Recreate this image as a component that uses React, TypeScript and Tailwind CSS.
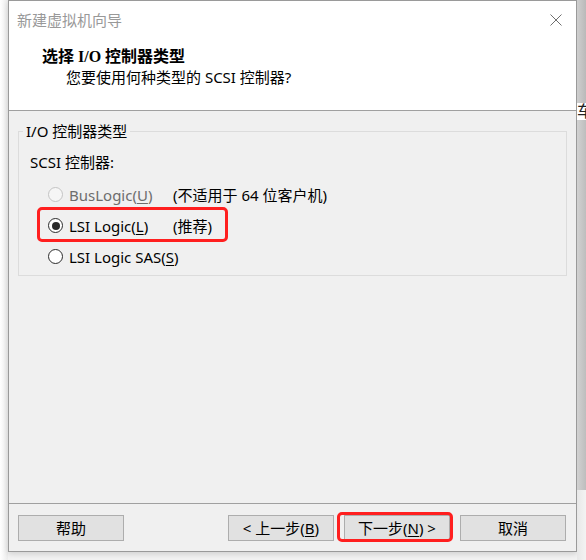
import React from 'react';

const Radio = ({ checked = false, disabled = false }: { checked?: boolean; disabled?: boolean }) => (
  <span
    className={`flex h-[15px] w-[15px] shrink-0 items-center justify-center rounded-full border ${
      disabled ? 'border-[#c4c4c4] bg-[#f6f6f6]' : 'border-[#2b2b2b] bg-white'
    }`}
  >
    {checked && <span className="h-[8px] w-[8px] rounded-full bg-[#2b2b2b]" />}
  </span>
);

const Btn = ({ children }: { children: React.ReactNode }) => (
  <button className="flex h-[26px] w-[106px] items-center justify-center border border-[#adadad] bg-[#e1e1e1] text-[15px] leading-[20px] text-black">
    {children}
  </button>
);

const u = 'underline underline-offset-[2px] decoration-1';

export default function App() {
  return (
    <div className="flex h-[560px] w-[586px] bg-[#f3f3f3] font-['Noto_Sans','Noto_Sans_CJK_SC',sans-serif] text-[15px] leading-[20px] text-black">
      <div className="w-[8px] bg-gradient-to-r from-white to-[#ececec]" />

      {/* dialog */}
      <div className="flex h-[552px] w-[569px] flex-col border border-[#9a9a9a] bg-[#f0f0f0] shadow-[0_2px_6px_rgba(0,0,0,0.15)]">
        {/* title bar */}
        <div className="flex h-[38px] items-center justify-between bg-white pl-[8px] pr-[14px]">
          <span className="text-[15px] text-[#999999]">新建虚拟机向导</span>
          <svg width="12" height="12" viewBox="0 0 12 12">
            <path d="M0.5 0.5 L11.5 11.5 M11.5 0.5 L0.5 11.5" stroke="#6f6f6f" strokeWidth="1" />
          </svg>
        </div>

        {/* header */}
        <div className="h-[72px] border-b border-[#a0a0a0] bg-white pl-[33px] pt-[8px]">
          <div className="font-['Liberation_Serif','Noto_Sans_CJK_SC',serif] text-[16px] font-bold">选择 I/O 控制器类型</div>
          <div className="pl-[24px]">您要使用何种类型的 SCSI 控制器?</div>
        </div>

        {/* body */}
        <div className="flex-1 px-[9px] pt-[10px]">
          <fieldset className="border border-[#dcdcdc] pb-[3px] pl-[11px]">
            <legend className="-ml-[7px] px-[3px]">I/O 控制器类型</legend>
            <div className="mt-[11px]">SCSI 控制器:</div>
            <div className="mt-[7px]">
              <div className="flex h-[31px] items-center">
                <div className="ml-[18px] flex w-[125px] items-center gap-[6px] text-[#6d6d6d]">
                  <Radio disabled />
                  <span>
                    BusLogic(<span className={u}>U</span>)
                  </span>
                </div>
                <span>(不适用于 64 位客户机)</span>
              </div>
              <div className="relative flex h-[31px] items-center">
                <div className="ml-[18px] flex w-[125px] items-center gap-[6px]">
                  <Radio checked />
                  <span>
                    LSI Logic(<span className={u}>L</span>)
                  </span>
                </div>
                <span>(推荐)</span>
                <div className="absolute -top-[3px] -bottom-[1px] left-[7px] w-[191px] rounded-[5px] border-[3px] border-[#ff1f1f]" />
              </div>
              <div className="flex h-[31px] items-center">
                <div className="ml-[18px] flex items-center gap-[6px]">
                  <Radio />
                  <span>
                    LSI Logic SAS(<span className={u}>S</span>)
                  </span>
                </div>
              </div>
            </div>
          </fieldset>
        </div>

        {/* footer */}
        <div className="flex h-[48px] items-start border-t border-[#a0a0a0] pl-[9px] pr-[10px] pt-[11px]">
          <Btn>帮助</Btn>
          <div className="flex-1" />
          <div className="flex gap-[10px]">
            <Btn>
              &lt; 上一步(<span className={u}>B</span>)
            </Btn>
            <div className="relative">
              <Btn>
                下一步(<span className={u}>N</span>) &gt;
              </Btn>
              <div className="absolute -top-[3px] -bottom-[1px] -left-[7px] -right-[3px] rounded-[5px] border-[3px] border-[#ff1f1f]" />
            </div>
            <Btn>取消</Btn>
          </div>
        </div>
      </div>

      {/* background window edge */}
      <div className="flex w-[9px] flex-col">
        <div className="h-[103px] bg-gradient-to-r from-[#cfcfcf] to-[#b9b9b9]" />
        <div className="h-[17px] overflow-hidden bg-white text-[16px] leading-[17px] text-[#222]">车</div>
        <div className="flex-1 bg-gradient-to-r from-[#d2d2d2] to-[#bdbdbd]" />
        <div className="h-[70px] bg-gradient-to-r from-[#e8e8e8] to-[#f3f3f3]" />
      </div>
    </div>
  );
}
